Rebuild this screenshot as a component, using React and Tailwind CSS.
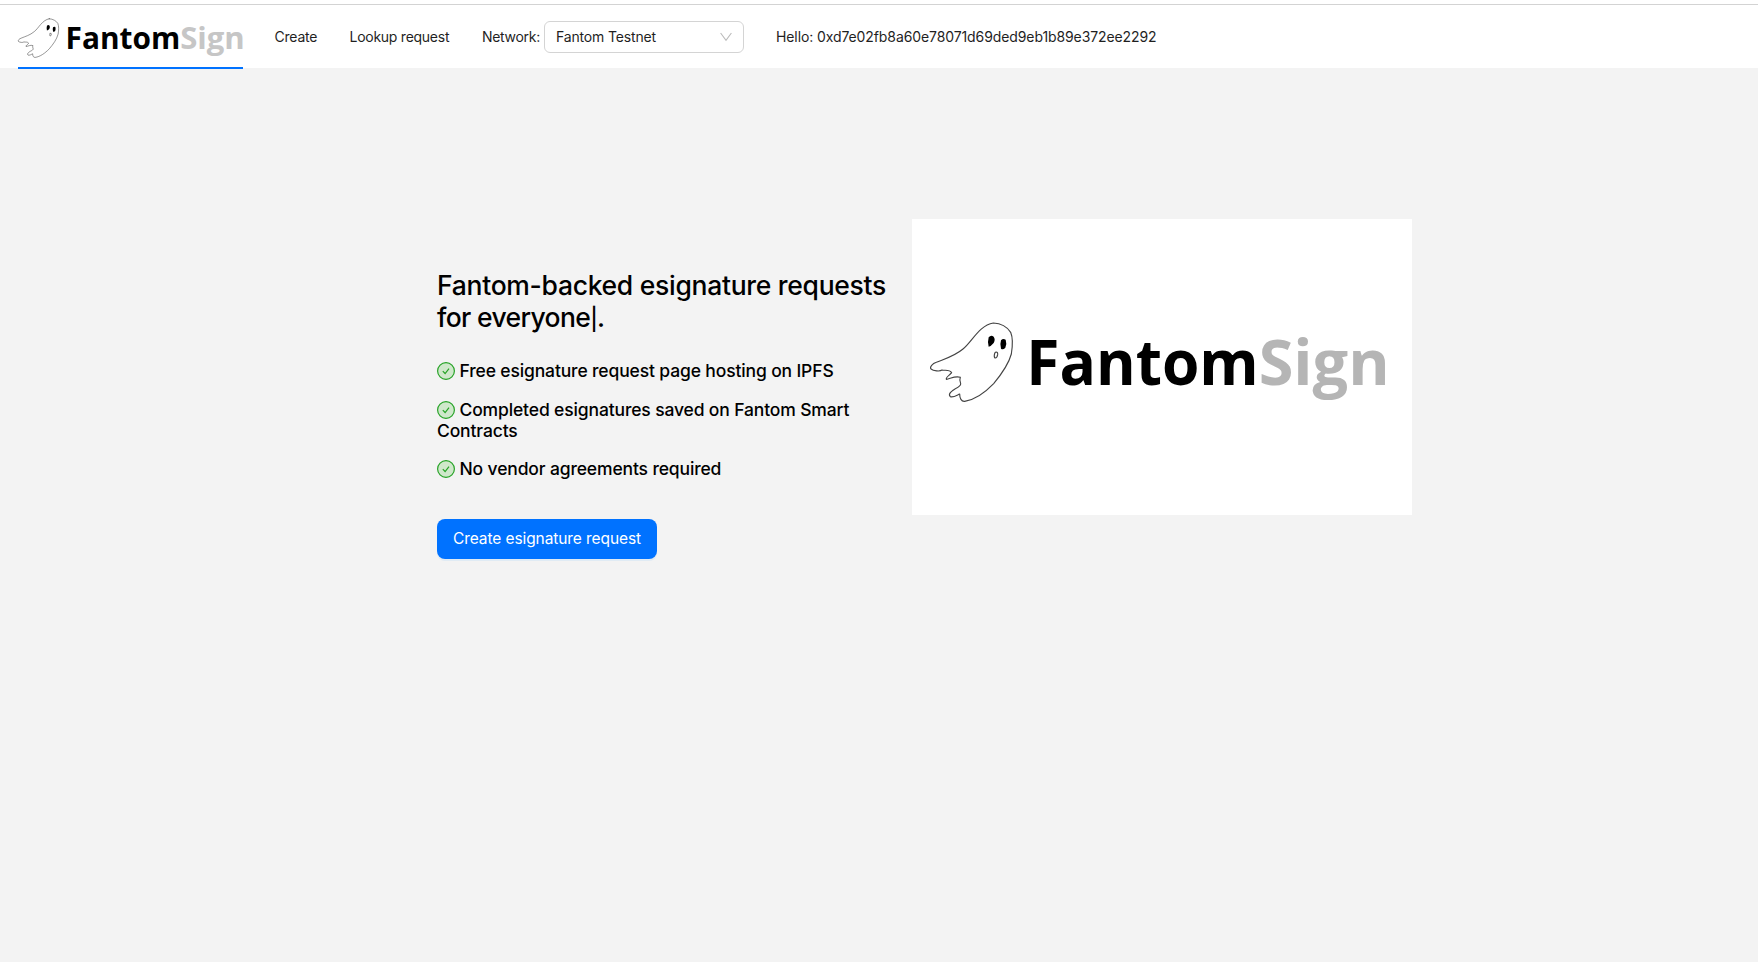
function Wordmark({ className, signClass }) {
  return (
    <svg viewBox="90 336 1368 240" className={className} role="img" aria-label="FantomSign">
      <g fill="none" stroke="#444" strokeWidth="3.4" strokeLinejoin="round" strokeLinecap="round">
        <path d="M280 339C304 340 323 353 332 367C339 384 338 408 334 432C325 466 304 493 281 521C254 549 224 570 194 574C184 575 179 565 179 552C170 556 160 563 151 560C143 552 154 543 166 536C175 532 183 528 182 521C180 515 178 508 181 502C166 497 151 506 139 508C136 502 149 496 155 488C149 478 137 482 126 480C120 485 100 483 93 477C88 470 98 461 109 457C133 447 163 439 189 417C216 396 237 346 280 339Z" />
        <path d="M286 427Q294 424 293 434Q291 445 285 444Q281 441 284 430Z" />
      </g>
      <path fill="#000" d="M266 382Q273 374 281 380Q287 388 281 399Q273 409 266 410Q262 396 266 382ZM303 391Q309 384 317 389Q321 400 316 413Q309 421 303 416Q299 403 303 391Z" />
      <g className="font-['Open_Sans',sans-serif] font-bold" fontSize="187">
        <text x="379" y="524" textLength="697" lengthAdjust="spacingAndGlyphs">Fantom</text>
        <text x="1076" y="524" textLength="393" lengthAdjust="spacingAndGlyphs" className={signClass}>Sign</text>
      </g>
    </svg>
  );
}

function Check() {
  return (
    <svg viewBox="0 0 18 18" className="mr-[4.5px] inline-block size-[18px] align-[-3px]">
      <circle cx="9" cy="9" r="8.4" fill="#cfe8cb" stroke="#27a327" strokeWidth="1.2" />
      <path d="M5.8 9.2L8.1 11.5L12 6.6" fill="none" stroke="#27a327" strokeWidth="1.2" />
    </svg>
  );
}

const points = [
  "Free esignature request page hosting on IPFS",
  "Completed esignatures saved on Fantom Smart Contracts",
  "No vendor agreements required",
];

export default function App() {
  return (
    <div className="flex h-[962px] flex-col overflow-hidden bg-[#f3f3f3] font-[Inter,sans-serif] text-black">
      <div className="h-1 shrink-0 bg-white" />
      <header className="flex h-16 shrink-0 items-start border-t border-[#d3d3d3] bg-white pl-[18px] text-sm leading-[63px] text-[#1f1f1f]">
        <a className="flex h-16 w-[225px] shrink-0 flex-col justify-between border-b-2 border-[#0072ff] pt-[13px]">
          <Wordmark className="h-10 w-[225px] overflow-visible" signClass="fill-[#c6c6c6]" />
        </a>
        <a className="ml-[31.5px] w-[75px] tracking-[-0.2px]">Create</a>
        <a className="w-[132.5px] tracking-[-0.26px]">Lookup request</a>
        <div className="flex items-center">
          <span className="w-[62px] tracking-[-0.3px]">Network:</span>
          <div className="flex h-8 w-[200px] items-center justify-between rounded-md border border-[#d4d4d4] pr-[11px] pl-[11px] leading-8">
            <span className="tracking-[-0.16px]">Fantom Testnet</span>
            <svg viewBox="0 0 12 12" className="size-3" fill="none" stroke="#bbb" strokeWidth="1.1">
              <path d="M.6 2L6 9.4L11.4 2" />
            </svg>
          </div>
        </div>
        <span className="ml-8 tracking-[-0.1px]">Hello: 0xd7e02fb8a60e78071d69ded9eb1b89e372ee2292</span>
      </header>
      <main className="flex pt-[151px] pl-[437px]">
        <section className="w-[475px] pt-[50px]">
          <h1 className="text-[26.5px] leading-8 font-medium tracking-[-0.29px]">
            Fantom-backed esignature requests<br />
            <span className="tracking-[-0.65px]">for everyone<span className="text-[22px] leading-none">|</span>.</span>
          </h1>
          <ul className="mt-[27px] flex w-[450px] flex-col text-[17.5px] leading-[21px] font-medium tracking-[-0.14px]">
            {points.map((p) => <li key={p} className="pb-[18px] last:pb-0 [&:nth-child(2)]:pb-[17px]"><Check />{p}</li>)}
          </ul>
          <button className="mt-10 h-10 w-[220px] rounded-lg bg-[#0072ff] pb-px text-[15.5px] tracking-[-0.09px] text-white shadow-[0_2px_0_rgba(5,145,255,0.08)]">
            Create esignature request
          </button>
        </section>
        <figure className="flex h-[296px] w-[500px] items-start bg-white pt-[103px] pl-[18px]">
          <Wordmark className="h-20 w-[456px] overflow-visible" signClass="fill-[#b5b5b5]" />
        </figure>
      </main>
    </div>
  );
}
